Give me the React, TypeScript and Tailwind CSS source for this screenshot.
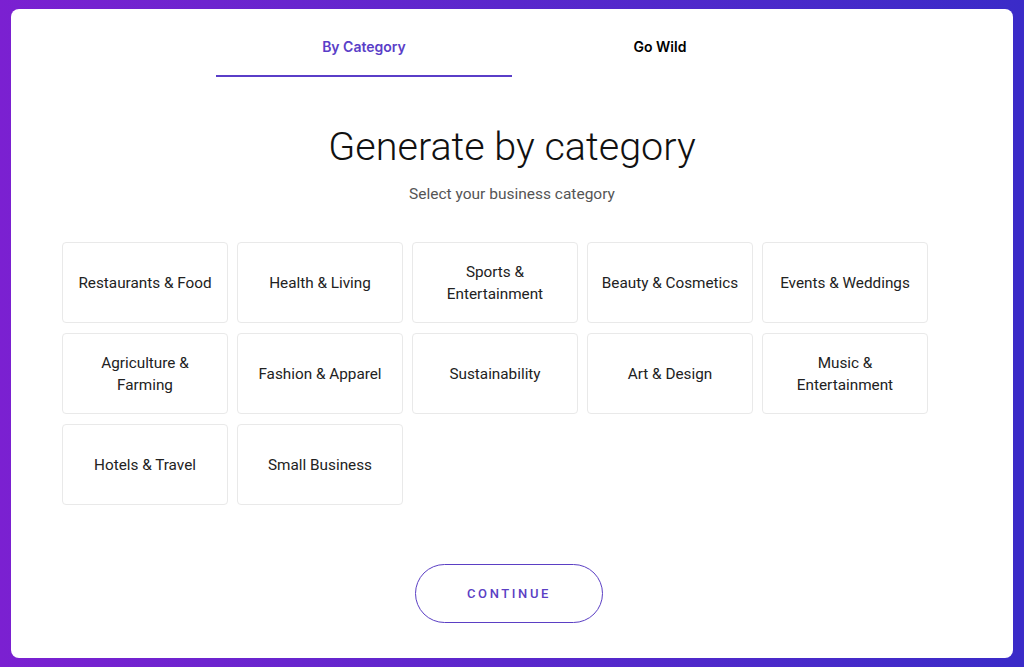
const categories = [
  "Restaurants & Food",
  "Health & Living",
  "Sports & Entertainment",
  "Beauty & Cosmetics",
  "Events & Weddings",
  "Agriculture & Farming",
  "Fashion & Apparel",
  "Sustainability",
  "Art & Design",
  "Music & Entertainment",
  "Hotels & Travel",
  "Small Business",
]

export default function App() {
  return (
    <div className="h-[667px] w-full bg-gradient-to-r from-[#7b20d1] via-[#5a27cc] to-[#3a2bc8] px-[11px] pt-[9px] pb-[9px] font-['Roboto',sans-serif]">
      <div className="h-full rounded-lg bg-white">
        {/* Tabs */}
        <div className="flex justify-center">
          <div className="flex w-[592px]">
            <button className="flex-1 border-b-2 border-[#5a3ec8] pt-[28px] pb-[18px] text-[14px] leading-[20px] font-semibold text-[#5a3ec8] font-['Inter',sans-serif]">
              By Category
            </button>
            <button className="flex-1 border-b-2 border-transparent pt-[28px] pb-[18px] text-[14px] leading-[20px] font-semibold text-black font-['Inter',sans-serif]">
              Go Wild
            </button>
          </div>
        </div>

        <h1 className="mt-[48px] text-center text-[39.5px] leading-[44px] font-light text-[#111]">
          Generate by category
        </h1>
        <p className="mt-[15px] text-center text-[15.5px] leading-[20px] text-[#555]">
          Select your business category
        </p>

        {/* Category grid */}
        <div className="mt-[38px] grid grid-cols-[repeat(5,166px)] gap-x-[9px] gap-y-[10px] pl-[51px]">
          {categories.map((c) => (
            <button
              key={c}
              className="flex h-[81px] items-center justify-center rounded border border-[#e9e9e9] px-3 text-center text-[15.3px] leading-[22px] text-[#222]"
            >
              {c}
            </button>
          ))}
        </div>

        <div className="mt-[59px] flex justify-center">
          <button className="ml-[-6px] h-[59px] w-[188px] rounded-full border border-[#5b3fc4] text-[13px] font-medium tracking-[2.6px] text-[#5b3fc4]">
            CONTINUE
          </button>
        </div>
      </div>
    </div>
  )
}
